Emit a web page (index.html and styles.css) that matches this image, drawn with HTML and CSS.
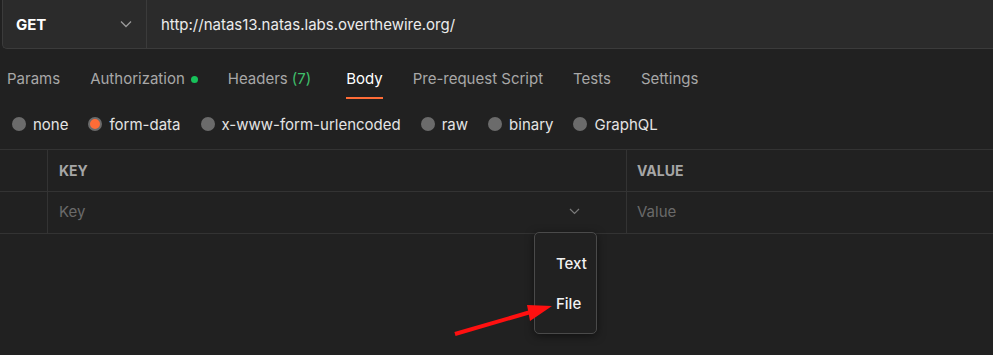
FILE: index.html
```html
<!DOCTYPE html>
<html lang="en">
<head>
    <meta charset="UTF-8">
    <meta name="viewport" content="width=device-width, initial-scale=1.0">
    <title>Request</title>

    <link rel="stylesheet" href="styles.css">
</head>
<body>

    <div class="urlBar">
        <div class="method">
            <span>GET</span>
            <svg class="chev" width="12" height="8" viewBox="0 0 12 8"><path d="M1 1.5 L6 6.5 L11 1.5" fill="none" stroke="#9a9a9a" stroke-width="1.3"/></svg>
        </div>
        <div class="url">http://natas13.natas.labs.overthewire.org/</div>
    </div>

    <div class="tabs">
        <div class="tab">Params</div>
        <div class="tab">Authorization <span class="dot"></span></div>
        <div class="tab headers">Headers <span class="count">(7)</span></div>
        <div class="tab active">Body</div>
        <div class="tab">Pre-request Script</div>
        <div class="tab">Tests</div>
        <div class="tab">Settings</div>
    </div>

    <div class="radios">
        <label class="radio"><span class="circle"></span>none</label>
        <label class="radio"><span class="circle on"></span>form-data</label>
        <label class="radio"><span class="circle"></span>x-www-form-urlencoded</label>
        <label class="radio"><span class="circle"></span>raw</label>
        <label class="radio"><span class="circle"></span>binary</label>
        <label class="radio"><span class="circle"></span>GraphQL</label>
    </div>

    <div class="table">
        <div class="row head">
            <div class="cell check"></div>
            <div class="cell key">KEY</div>
            <div class="cell value">VALUE</div>
        </div>
        <div class="row">
            <div class="cell check"></div>
            <div class="cell key placeholder">
                Key
                <svg width="11" height="7" viewBox="0 0 11 7"><path d="M1 1 L5.5 5.5 L10 1" fill="none" stroke="#7a7a7a" stroke-width="1.2"/></svg>
            </div>
            <div class="cell value placeholder">Value</div>
        </div>

        <div class="menu">
            <div class="menuItem">Text</div>
            <div class="menuItem">File</div>
        </div>

        <svg class="arrow" width="130" height="50" viewBox="0 0 130 50">
            <line x1="25" y1="43" x2="104" y2="20" stroke="#ff1010" stroke-width="4"/>
            <polygon points="122,15 97,14 100,30" fill="#ff1010"/>
        </svg>
    </div>

</body>
</html>
```

FILE: styles.css
```css
*{
    margin: 0;
    padding: 0;
    box-sizing: border-box;
}

html, body{
    width: 100%;
    height: 100%;
}

body{
    background-color: #212121;
    font-family: Inter, "Noto Sans", sans-serif;
    font-size: 15px;
    color: #e6e6e6;
    overflow: hidden;
}

.urlBar{
    display: flex;
    height: 49px;
    margin-left: 2px;
    background-color: #2b2b2b;
    border: 1px solid #3b3b3b;
    border-top: none;
    border-right: none;
    border-radius: 0 0 0 5px;
}

.method{
    width: 144px;
    display: flex;
    align-items: center;
    justify-content: space-between;
    padding: 0 14px 0 13px;
    border-right: 1px solid #3b3b3b;
    font-weight: 700;
    color: #ffffff;
}

.url{
    display: flex;
    align-items: center;
    padding-left: 14px;
    color: #ececec;
}

.tabs{
    display: flex;
    gap: 30px;
    padding-left: 7px;
    margin-top: 20px;
}

.tab{
    display: flex;
    align-items: center;
    gap: 6px;
    color: #a8a8a8;
    padding-bottom: 8px;
    border-bottom: 2px solid transparent;
    line-height: 20px;
}

.tab.headers{
    gap: 4px;
    margin-right: 5px;
}

.tab.active{
    color: #ffffff;
    border-bottom-color: #ff6c37;
}

.dot{
    width: 7px;
    height: 7px;
    border-radius: 50%;
    background-color: #17c15a;
}

.count{
    color: #3fbf6a;
}

.radios{
    display: flex;
    gap: 20px;
    padding-left: 12px;
    margin-top: 15px;
    height: 20px;
}

.radio{
    display: flex;
    align-items: center;
    gap: 7px;
    color: #e4e4e4;
}

.circle{
    width: 14px;
    height: 14px;
    border-radius: 50%;
    background-color: #6b6b6b;
}

.circle.on{
    background-color: #ff6c37;
    border: 2px solid #6b6b6b;
}

.table{
    position: relative;
    margin-top: 15px;
    border-top: 1px solid #333333;
}

.row{
    display: flex;
    height: 42px;
    border-bottom: 1px solid #333333;
}

.cell{
    display: flex;
    align-items: center;
}

.check{
    width: 48px;
    border-right: 1px solid #333333;
}

.key{
    width: 579px;
    padding-left: 11px;
    padding-right: 46px;
    border-right: 1px solid #333333;
    justify-content: space-between;
}

.value{
    flex: 1;
    padding-left: 10px;
}

.head .cell{
    font-weight: 700;
    font-size: 14px;
    color: #a6a6a6;
}

.placeholder{
    color: #6a6a6a;
    padding-bottom: 2px;
}

.menu{
    position: absolute;
    left: 534px;
    top: 82px;
    width: 63px;
    height: 102px;
    padding: 21px 0 0 21px;
    border: 1px solid #4a4a4a;
    border-radius: 5px;
    background-color: #212121;
    box-shadow: 0 2px 8px rgba(0, 0, 0, 0.5);
}

.menuItem{
    height: 40px;
    font-weight: 500;
    color: #f2f2f2;
}

.arrow{
    position: absolute;
    left: 430px;
    top: 141px;
}
```
